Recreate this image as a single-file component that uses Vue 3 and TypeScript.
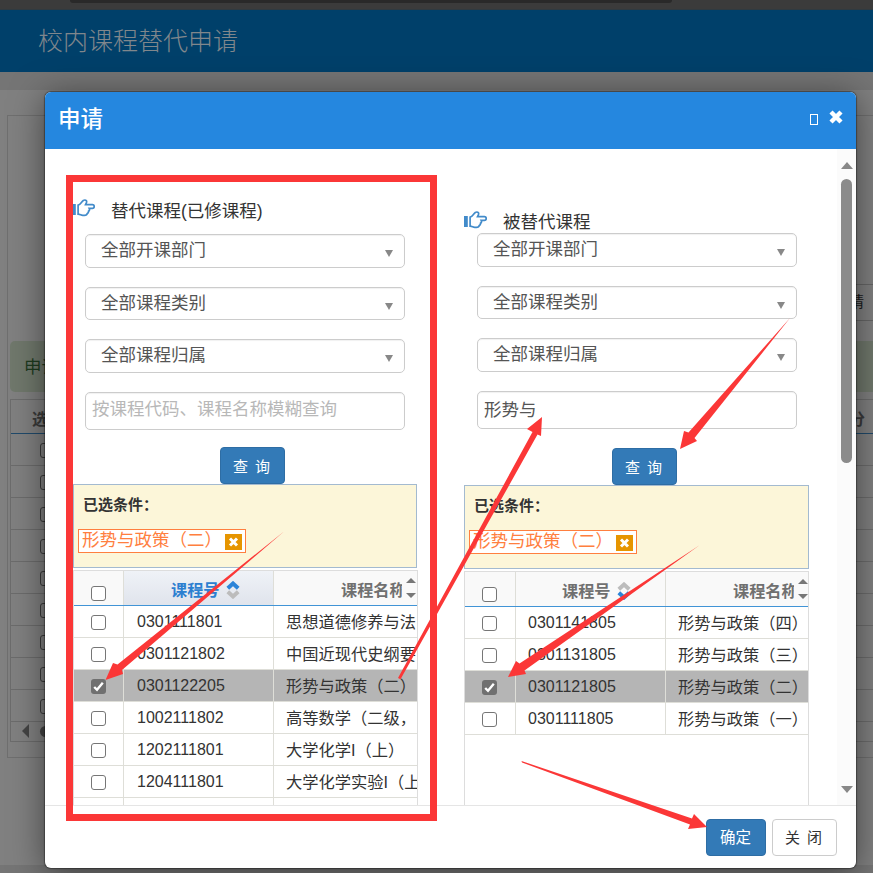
<script setup lang="ts">
interface Course {
  code: string
  name: string
  checked?: boolean
}
interface Panel {
  key: string
  title: string
  keyword: string
  sort: 'up' | 'down'
  rows: Course[]
}

const filters: string[] = ['全部开课部门', '全部课程类别', '全部课程归属']
const chosen = '形势与政策（二）'
const panels: Panel[] = [
  {
    key: 'left',
    title: '替代课程(已修课程)',
    keyword: '',
    sort: 'up',
    rows: [
      { code: '0301111801', name: '思想道德修养与法' },
      { code: '0301121802', name: '中国近现代史纲要' },
      { code: '0301122205', name: '形势与政策（二）', checked: true },
      { code: '1002111802', name: '高等数学（二级，' },
      { code: '1202111801', name: '大学化学I（上）' },
      { code: '1204111801', name: '大学化学实验I（上' },
      { code: '', name: '' },
    ],
  },
  {
    key: 'right',
    title: '被替代课程',
    keyword: '形势与',
    sort: 'down',
    rows: [
      { code: '0301141805', name: '形势与政策（四）' },
      { code: '0301131805', name: '形势与政策（三）' },
      { code: '0301121805', name: '形势与政策（二）', checked: true },
      { code: '0301111805', name: '形势与政策（一）' },
    ],
  },
]
const arrows: string[] = [
  '284,531.5 117.5,664.5 113,663 105.5,680 123,674 122,670',
  '398,678 532.5,432 527,429 542,417 541,436 537.5,434.5 400.5,679.3',
  '790,318 688.5,432.5 684,431 680,449 697,441 694.5,438',
  '699.5,545.3 519.5,663.5 516,661 508,677 526,674 524.5,670.5',
  '521.5,761 692,818.5 694,814 707,827 688,829 690,824.5 522,762.4',
]
</script>

<template>
  <div class="page">
    <div class="browser"><div class="address"></div></div>
    <div class="banner">校内课程替代申请</div>
    <div class="content">
      <div class="board">
        <div class="toolbar"><span class="apply">申请</span></div>
        <div class="alert">申请</div>
        <div class="grid">
          <div class="grid-head"><span>选择</span><span>学分</span></div>
          <div v-for="n in 9" :key="n" class="grid-row"><span class="box"></span></div>
          <div class="grid-scroll"><i class="tri-left"></i><i class="knob"></i></div>
        </div>
      </div>
    </div>

    <div class="modal">
      <header class="modal-head">
        <span class="modal-title">申请</span>
        <i class="glyph"></i>
        <svg class="close" viewBox="0 0 14 14"><path d="M2 2 12 12M12 2 2 12" /></svg>
      </header>
      <div class="modal-body">
        <section v-for="p in panels" :key="p.key" class="panel" :class="p.key">
          <div class="panel-title">
            <svg class="hand" viewBox="0 0 24 18">
              <rect x="0" y="5" width="3.8" height="11" />
              <path d="M6.1 6.2C8.4 6 9.2 3 11.3 1.5 13 .4 15 1.3 14.6 3.1 14.4 4.2 13.8 5 13.5 5.7H20.4C22.8 5.7 22.8 9.3 20.4 9.3H17.2C18 10.7 17.2 11.8 16.5 12.2 16.7 13.6 15.9 14.3 15.2 14.6 15 16 13.8 16.3 12.5 16.3H10.7C9 16.3 8.1 15.2 6.1 15.2Z" />
            </svg>
            <span>{{ p.title }}</span>
          </div>
          <div class="fields">
            <div v-for="f in filters" :key="f" class="select"><span>{{ f }}</span><i class="caret"></i></div>
            <div class="input" :class="{ empty: !p.keyword }">{{ p.keyword || '按课程代码、课程名称模糊查询' }}</div>
          </div>
          <button class="btn primary query">查 询</button>
          <div class="conditions">
            <b>已选条件：</b>
            <div class="tag">
              <span>{{ chosen }}</span>
              <svg viewBox="0 0 17 16"><path d="M5 4.5 12 11.5M12 4.5 5 11.5" /></svg>
            </div>
          </div>
          <div class="table">
            <div class="thead">
              <div class="c1"><span class="box"></span></div>
              <div class="c2" :class="p.sort">
                <span>课程号</span>
                <svg class="sort" viewBox="0 0 14 18">
                  <path class="s-up" d="M1.8 7.2 7 2.5 12.2 7.2" />
                  <path class="s-down" d="M1.8 10.8 7 15.5 12.2 10.8" />
                </svg>
              </div>
              <div class="c3"><span>课程名称</span><i class="spin"><i></i><i></i></i></div>
            </div>
            <div v-for="(r, i) in p.rows" :key="i" class="row" :class="{ on: r.checked }">
              <div class="c1">
                <span class="box" :class="{ checked: r.checked }">
                  <svg v-if="r.checked" viewBox="0 0 15 15"><path d="M3.2 8 6 10.8 11.8 3.8" /></svg>
                </span>
              </div>
              <div class="c2">{{ r.code }}</div>
              <div class="c3">{{ r.name }}</div>
            </div>
          </div>
        </section>
        <div class="scrollbar"><i class="tri-up"></i><i class="thumb"></i><i class="tri-down"></i></div>
      </div>
      <footer class="modal-foot">
        <button class="btn primary ok">确定</button>
        <button class="btn plain">关 闭</button>
      </footer>
    </div>

    <svg class="marks" viewBox="0 0 873 873">
      <rect x="69.5" y="178.5" width="364" height="639" />
      <polygon v-for="a in arrows" :key="a" :points="a" />
    </svg>
  </div>
</template>

<style>
body {
  margin: 0;
  overflow: hidden;
}
</style>

<style scoped>
.page,
.page * {
  box-sizing: border-box;
}
.page {
  position: relative;
  width: 873px;
  height: 873px;
  overflow: hidden;
  background: #757575;
  font-family: 'Liberation Sans', 'Noto Sans CJK SC', sans-serif;
  color: #333;
  white-space: nowrap;
}
i {
  display: block;
}
.browser {
  height: 10px;
  background: #3b3b3b;
  border-bottom: 1px solid #303a40;
}
.address {
  width: 602px;
  height: 3px;
  margin-left: 70px;
  background: #292929;
  border-radius: 0 0 10px 10px;
}
.banner {
  height: 62px;
  padding-left: 38px;
  line-height: 62px;
  font-size: 25px;
  font-weight: 300;
  color: #80878c;
  background: #00406a;
}
.content {
  height: 775px;
  margin-top: 18px;
  padding: 25px 0 0 7px;
  background: #808080;
}
.board {
  height: 643px;
  border: 1px solid #6f6f6f;
  border-right: 0;
  padding-left: 2px;
}
.toolbar {
  display: flex;
  justify-content: flex-end;
  height: 225px;
  padding-top: 168px;
}
.apply {
  width: 70px;
  height: 37px;
  border: 1px solid #666;
  border-right: 0;
  padding-left: 30px;
  line-height: 34px;
  font-size: 15px;
  color: #1a1a1a;
}
.alert {
  height: 51px;
  padding-left: 14px;
  border-radius: 5px 0 0 5px;
  background: #70786c;
  color: #1e3b1f;
  font-size: 17.5px;
  line-height: 52px;
}
.grid {
  height: 343px;
  margin-top: 7px;
  border: 1px solid #6c6c6c;
  border-right: 0;
}
.grid-head {
  display: flex;
  justify-content: space-between;
  height: 34px;
  padding: 0 8px 0 21px;
  border-bottom: 1px solid #204a6b;
  line-height: 39px;
  font-size: 16px;
  font-weight: bold;
  color: #3a3a3a;
}
.grid-row {
  height: 32px;
  padding: 9px 0 0 29px;
  border-bottom: 1px solid #6c6c6c;
}
.grid-row .box {
  background: #808080;
  border-color: #3b3b3b;
}
.grid-scroll {
  display: flex;
  align-items: center;
  gap: 11px;
  height: 18px;
  padding-left: 11px;
}
.tri-left {
  border: 7px solid transparent;
  border-left: 0;
  border-right-color: #444;
}
.knob {
  width: 60px;
  height: 11px;
  border-radius: 6px;
  background: #444;
}
.modal {
  position: absolute;
  left: 45px;
  top: 92px;
  width: 811px;
  height: 776px;
  display: flex;
  flex-direction: column;
  border-radius: 6px;
  background: #fff;
  overflow: hidden;
  box-shadow: 0 0 1px 1px rgba(0, 0, 0, 0.35), 0 5px 34px rgba(0, 0, 0, 0.5);
}
.modal-head {
  flex: none;
  display: flex;
  align-items: center;
  height: 57px;
  padding: 0 13px 0 13px;
  background: #2587df;
  color: #fff;
}
.modal-title {
  flex: 1;
  font-size: 22.5px;
  font-weight: 500;
  line-height: 56px;
  height: 57px;
}
.glyph {
  width: 8px;
  height: 11px;
  margin: -2px 11px 0 0;
  border: 1px solid #fff;
}
.close {
  width: 14px;
  height: 14px;
  margin-top: -7px;
}
.close path {
  stroke: #fff;
  stroke-width: 4.4;
  fill: none;
}
.modal-body {
  height: 656px;
  flex: none;
  display: flex;
  overflow: hidden;
}
.panel {
  flex: none;
  width: 345px;
  margin-left: 28px;
  display: flex;
  flex-direction: column;
}
.panel.right {
  margin-left: 46px;
}
.panel-title {
  flex: none;
  display: flex;
  height: 85px;
  padding-top: 50px;
  font-size: 17.5px;
  line-height: 24px;
}
.right .panel-title {
  height: 84px;
  padding-top: 61px;
}
.panel-title span {
  margin-left: 15px;
}
.left .panel-title .hand {
  margin-left: -1px;
}
.hand {
  width: 24px;
  height: 18px;
  margin-top: 1px;
  fill: #428bca;
}
.left .hand {
  margin-top: 0;
}
.hand path {
  fill: none;
  stroke: #428bca;
  stroke-width: 1.7;
}
.fields {
  flex: none;
  display: flex;
  flex-direction: column;
  gap: 19px;
  padding: 0 13px 0 12px;
}
.right .fields {
  padding: 0 12px 0 13px;
}
.select,
.input {
  height: 33.5px;
  border: 1px solid #ccc;
  border-radius: 5px;
  font-size: 17.5px;
  color: #555;
  box-shadow: inset 0 1px 1px rgba(0, 0, 0, 0.06);
}
.select {
  display: flex;
  justify-content: space-between;
  padding: 0 11px 0 15px;
  line-height: 31px;
}
.caret {
  margin-top: 15px;
  height: 0;
  border: 4.5px solid transparent;
  border-top: 7px solid #888;
  border-bottom: 0;
}
.input {
  height: 38px;
  padding-left: 6px;
  line-height: 36px;
}
.input.empty {
  line-height: 33px;
  color: #b8b8b8;
}
.btn {
  flex: none;
  border: 1px solid #2e6da4;
  border-radius: 4px;
  padding: 0 0 2px;
  font-family: inherit;
  font-size: 15.5px;
  height: 37px;
}
.primary {
  color: #fff;
  background: #337ab7;
}
.query {
  width: 65px;
  margin: 17.5px 0 0 147px;
  padding: 0 2px 0 0;
  word-spacing: 3px;
  font-size: 15px;
}
.right .query {
  margin: 19.5px 0 0 148px;
}
.conditions {
  flex: none;
  height: 84px;
  padding: 10px 4px 0;
  border: 1px solid #a3bad0;
  background: #fcf6d9;
}
.left .conditions {
  width: 344px;
}
.conditions b {
  display: block;
  height: 34px;
  padding-left: 5px;
  font-size: 15px;
  line-height: 20px;
}
.tag {
  display: flex;
  align-items: center;
  justify-content: space-between;
  width: 168px;
  height: 24px;
  padding: 0 3px;
  border: 1px solid #ff7f3f;
  background: #fff;
  color: #ff7f3f;
  font-size: 17.5px;
  line-height: 22px;
}
.tag svg {
  flex: none;
  width: 17px;
  height: 16px;
  margin-top: 2px;
  background: #e69500;
}
.tag span {
  width: 140px;
  height: 22px;
  line-height: 21px;
}
.tag path {
  stroke: #fff;
  stroke-width: 3;
}
.table {
  flex: none;
  height: 260px;
  margin-top: 2px;
  border: 1px solid #ddd;
  border-bottom: 0;
  overflow: hidden;
}
.thead,
.row {
  display: flex;
}
.thead {
  height: 35px;
  border-bottom: 1px solid #4194d6;
  background: #f9f9f9;
  font-size: 16.2px;
  font-weight: bold;
  color: #707070;
}
.c1 {
  flex: none;
  display: flex;
  align-items: center;
  justify-content: center;
  width: 50px;
  padding-right: 1px;
  border-right: 1px solid #deded8;
}
.c2 {
  flex: none;
  width: 150px;
  border-right: 1px solid #deded8;
}
.right .c1 {
  width: 51px;
  padding-right: 2px;
}
.c3 {
  width: 143px;
  overflow: hidden;
}
.thead .c1 {
  padding-top: 11px;
}
.thead .c2 {
  display: flex;
  gap: 6px;
  padding-left: 47px;
  line-height: 39px;
}
.right .thead .c2 {
  padding-left: 46px;
}
.c2.up {
  background: linear-gradient(#eff2f7, #e0e4ec);
  color: #2c7fd0;
}
.sort {
  width: 14px;
  height: 18px;
  margin-top: 10px;
}
.sort path {
  fill: none;
  stroke: #bcbcbc;
  stroke-width: 4;
}
.up .s-up,
.down .s-down {
  stroke: #2c84d8;
}
.thead .c3 {
  display: flex;
  padding-left: 67px;
  line-height: 39px;
}
.thead .c3 span {
  width: 61px;
  overflow: hidden;
}
.spin {
  display: flex;
  flex-direction: column;
  gap: 10px;
  margin: 7px 0 0 4px;
}
.spin i {
  border: 5px solid transparent;
  border-top: 0;
  border-bottom-color: #777;
}
.spin i + i {
  border-top: 5px solid #777;
  border-bottom: 0;
}
.row {
  height: 32px;
  font-size: 16px;
  line-height: 31px;
}
.row > div {
  border-bottom: 1px solid #deded8;
}
.row.on {
  background: #b5b5b5;
}
.row .c1 {
  padding-top: 2px;
}
.row .c2 {
  padding-left: 13px;
}
.right .row .c2 {
  padding-left: 12px;
}
.row .c3 {
  padding-left: 12px;
  font-size: 16.25px;
  line-height: 33px;
}
.box {
  display: block;
  width: 15px;
  height: 15px;
  border: 1.5px solid #767676;
  border-radius: 3px;
  background: #fff;
}
.box.checked {
  border: 0;
  background: #707070;
}
.box svg {
  display: block;
}
.box path {
  fill: none;
  stroke: #fff;
  stroke-width: 2.4;
}
.scrollbar {
  display: flex;
  flex-direction: column;
  align-items: center;
  width: 19px;
  margin-left: auto;
  padding: 13px 0 12px;
  background: #fbfbfb;
}
.tri-up {
  border: 6.5px solid transparent;
  border-top: 0;
  border-bottom: 7px solid #888;
}
.thumb {
  width: 11px;
  height: 284px;
  margin-top: 10px;
  border-radius: 6px;
  background: #8b8b8b;
}
.tri-down {
  margin-top: auto;
  border: 6.5px solid transparent;
  border-bottom: 0;
  border-top: 7px solid #888;
}
.modal-foot {
  flex: none;
  display: flex;
  justify-content: flex-end;
  gap: 6px;
  height: 63px;
  padding: 13px 19px 0 0;
  border-top: 1px solid #e5e5e5;
}
.ok {
  width: 60px;
  padding: 0 1px 4px 0;
}
.plain {
  width: 65px;
  padding: 0 2px 3px 0;
  border-color: #ccc;
  background: #fff;
  color: #333;
  font-size: 15px;
  word-spacing: 3px;
}
.marks {
  position: absolute;
  left: 0;
  top: 0;
  width: 873px;
  height: 873px;
}
.marks rect {
  fill: none;
  stroke: #fb3737;
  stroke-width: 7;
}
.marks polygon {
  fill: #fb3737;
}
</style>
